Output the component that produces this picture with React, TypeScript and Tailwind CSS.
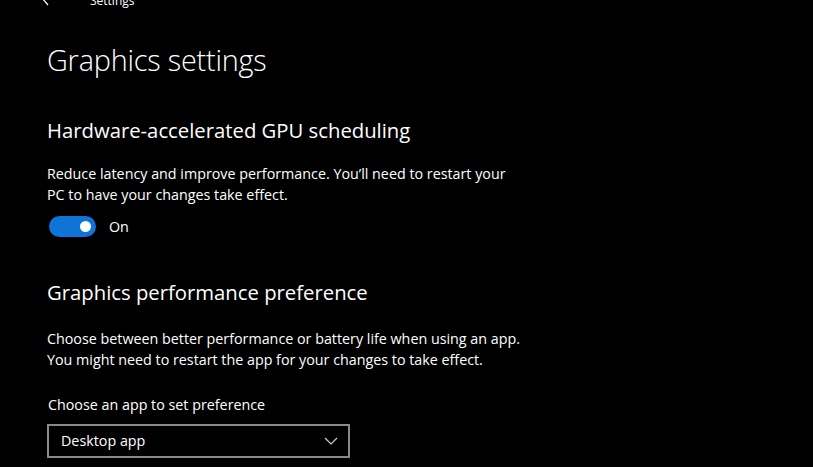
import React from "react";

export default function App() {
  return (
    <div
      className="w-[813px] h-[467px] bg-black text-white overflow-hidden relative"
      style={{ fontFamily: '"Open Sans", "Noto Sans", sans-serif' }}
    >
      <div className="flex items-center h-[10px] -mt-[4px] pl-[40px]">
        <svg width="10" height="16" viewBox="0 0 10 16" className="mt-[-6px]">
          <path d="M8 1 L2 8 L8 15" stroke="white" strokeWidth="1.2" fill="none" />
        </svg>
        <span className="ml-[40px] text-[12px] leading-[12px]">Settings</span>
      </div>
      <div className="pl-[47px]">
        <h1 className="mt-[34px] text-[28.8px] leading-[40px] font-light tracking-[-0.2px]">Graphics settings</h1>
        <h2 className="mt-[36px] text-[20.3px] leading-[28px] font-normal">Hardware-accelerated GPU scheduling</h2>
        <p className="mt-[19px] text-[14.3px] leading-[21px] w-[470px]">
          Reduce latency and improve performance. You’ll need to restart your PC to have your changes take effect.
        </p>
        <div className="flex items-center mt-[11px] ml-[2px]">
          <div className="w-[47px] h-[21px] rounded-full bg-[#0f73d8] flex items-center justify-end pr-[5px]">
            <div className="w-[11px] h-[11px] rounded-full bg-white" />
          </div>
          <span className="ml-[13px] text-[14.3px] leading-[20px]">On</span>
        </div>
        <h2 className="mt-[41px] text-[20.3px] leading-[28px] font-normal">Graphics performance preference</h2>
        <p className="mt-[22px] text-[14.3px] leading-[21px] w-[480px]">
          Choose between better performance or battery life when using an app. You might need to restart the app for your changes to take effect.
        </p>
        <p className="mt-[25px] text-[14.3px] leading-[20px] ml-[1px]">Choose an app to set preference</p>
        <div className="mt-[9px] w-[303px] h-[34px] border-2 border-[#8a8a8a] flex items-center justify-between pl-[12px] pr-[10px]">
          <span className="text-[14.3px]">Desktop app</span>
          <svg width="14" height="8" viewBox="0 0 14 8">
            <path d="M1 1 L7 7 L13 1" stroke="#d0d0d0" strokeWidth="1.2" fill="none" />
          </svg>
        </div>
      </div>
    </div>
  );
}
